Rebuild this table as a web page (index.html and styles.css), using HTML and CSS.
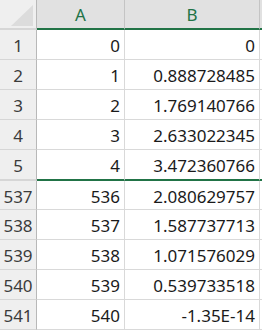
FILE: index.html
```html
<!DOCTYPE html>
<html>
<head>
<meta charset="utf-8">
<link rel="stylesheet" href="styles.css">
</head>
<body>
<div class="sheet">
  <div class="corner"><div class="tri"></div></div>
  <div class="colhdr">A</div>
  <div class="colhdr">B</div>
  <div class="colhdr pad"></div>

  <div class="rowhdr">1</div><div class="cell">0</div><div class="cell">0</div><div class="cell pad"></div>
  <div class="rowhdr">2</div><div class="cell">1</div><div class="cell">0.888728485</div><div class="cell pad"></div>
  <div class="rowhdr">3</div><div class="cell">2</div><div class="cell">1.769140766</div><div class="cell pad"></div>
  <div class="rowhdr">4</div><div class="cell">3</div><div class="cell">2.633022345</div><div class="cell pad"></div>
  <div class="rowhdr split">5</div><div class="cell split">4</div><div class="cell split">3.472360766</div><div class="cell pad split"></div>

  <div class="rowhdr">537</div><div class="cell">536</div><div class="cell">2.080629757</div><div class="cell pad"></div>
  <div class="rowhdr">538</div><div class="cell">537</div><div class="cell">1.587737713</div><div class="cell pad"></div>
  <div class="rowhdr">539</div><div class="cell">538</div><div class="cell">1.071576029</div><div class="cell pad"></div>
  <div class="rowhdr">540</div><div class="cell">539</div><div class="cell">0.539733518</div><div class="cell pad"></div>
  <div class="rowhdr">541</div><div class="cell">540</div><div class="cell">-1.35E-14</div><div class="cell pad"></div>
</div>
</body>
</html>
```
FILE: styles.css
```css
html, body {
  margin: 0;
  padding: 0;
  background: #ffffff;
}
.sheet {
  display: grid;
  grid-template-columns: 37px 88px 135px 2px;
  grid-template-rows: 30px 30px 30px 30px 30px 31px 29px 30px 30px 30px 30px;
  font-family: "Noto Sans", "Noto Sans CJK JP", sans-serif;
  font-size: 17px;
  color: #1a1a1a;
  width: 262px;
  overflow: hidden;
}
.corner {
  background: #efefef;
  border-right: 1px solid #b8b8b8;
  border-bottom: 2px solid #d6d6d6;
  box-sizing: border-box;
  position: relative;
}
.tri {
  position: absolute;
  left: 11px;
  top: 5px;
  width: 22px;
  height: 21px;
  background: #dcdcdc;
  clip-path: polygon(100% 0, 100% 100%, 0 100%);
}
.colhdr {
  background: #e1e1e1;
  border-right: 1px solid #c4c4c4;
  border-bottom: 2px solid #217346;
  box-sizing: border-box;
  display: flex;
  align-items: center;
  justify-content: center;
  color: #217346;
  font-size: 17px;
  padding-top: 1px;
}
.colhdr.pad {
  border-right: none;
}
.rowhdr {
  background: #efefef;
  border-right: 1px solid #b8b8b8;
  border-bottom: 1px solid #d6d6d6;
  box-sizing: border-box;
  display: flex;
  align-items: center;
  justify-content: center;
  color: #3b3b3b;
  padding-top: 2px;
}
.cell {
  border-right: 1px solid #d9d9d9;
  border-bottom: 1px solid #d9d9d9;
  box-sizing: border-box;
  display: flex;
  align-items: center;
  justify-content: flex-end;
  padding-right: 4px;
  padding-top: 2px;
}
.cell.pad {
  border-right: none;
  padding: 0;
}
.cell.split {
  border-bottom: 2px solid #217346;
}
.rowhdr.split {
  border-bottom: 2px solid #d6d6d6;
}
```
